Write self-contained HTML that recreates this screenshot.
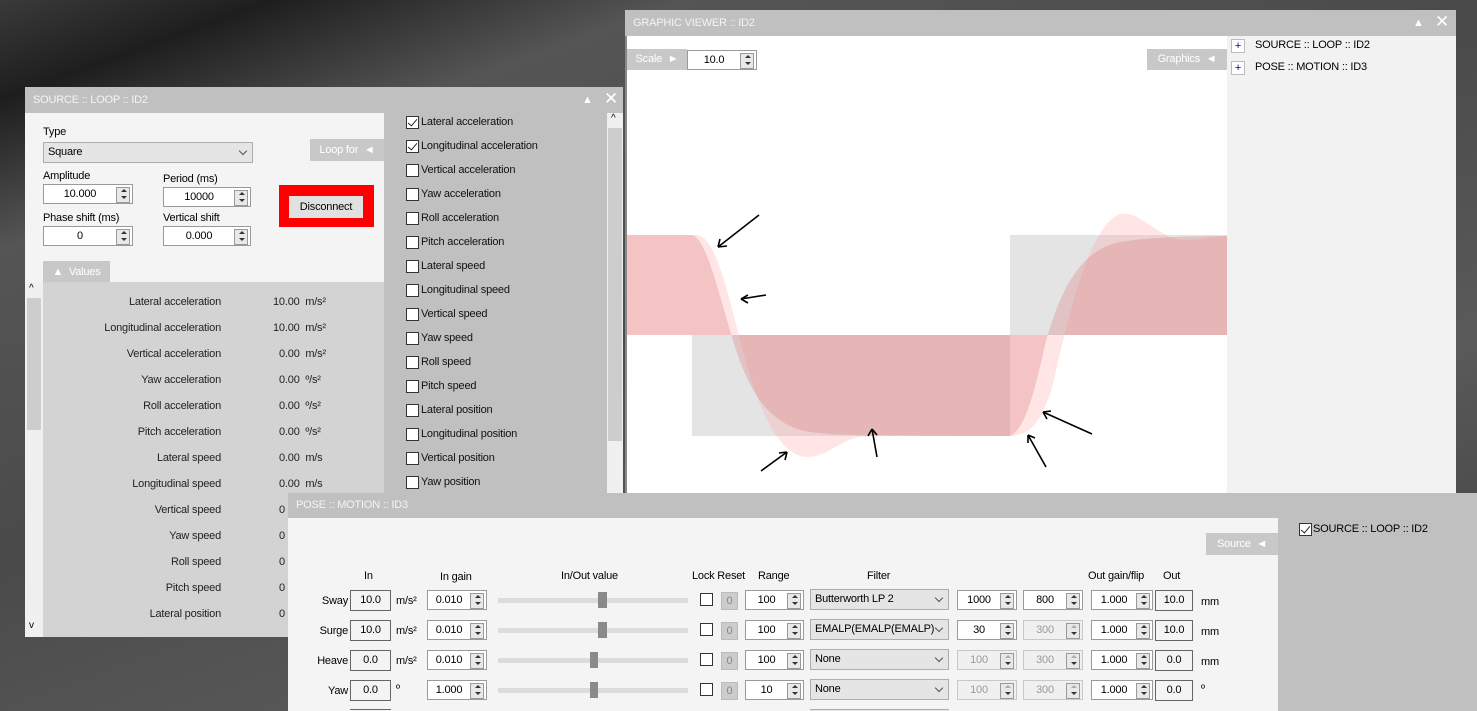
<!DOCTYPE html>
<html><head><meta charset="utf-8"><style>
*{box-sizing:border-box;margin:0;padding:0}
html,body{width:1477px;height:711px;overflow:hidden}
body{position:relative;font-family:"Liberation Sans",sans-serif;font-size:11px;letter-spacing:-0.2px;color:#000;
background:linear-gradient(160deg,#3a3a3a 0%,#1e1e1e 8%,#555 20%,#4a4a4a 45%,#5a5a5a 70%,#3c3c3c 100%)}
.a{position:absolute}
.tb{position:absolute;background:#c0c0c0;color:#f4f4f4;padding-left:8px;line-height:26px}
.in{position:absolute;background:#fff;border:1px solid #9a9a9a;height:20px;line-height:18px;text-align:center;padding-right:16px}
.in:before{content:"";position:absolute;right:2px;top:2px;width:12px;height:14px;border:1px solid #999;background:#e8e8e8}
.in:after{content:"";position:absolute;right:5px;top:4px;width:0;height:0;border:3px solid transparent;border-bottom-color:#333;border-top-width:0;box-shadow:none}
.in b{position:absolute;right:5px;top:11px;width:0;height:0;border:3px solid transparent;border-top-color:#333;border-bottom-width:0}
.dis{color:#999;background:#f0f0f0;border-color:#c8c8c8}
.dis:after{border-bottom-color:#aaa}
.tab{position:absolute;background:#c8c8c8;color:#fff;line-height:22px;text-align:center}
.cb{position:absolute;width:13px;height:13px;border:1px solid #333;background:#fff}
.ck:after{content:"";position:absolute;left:3px;top:0px;width:4px;height:8px;border:solid #222;border-width:0 1.5px 1.5px 0;transform:rotate(40deg)}
.lbl{position:absolute;text-align:right}
.cmb{position:absolute;background:#e5e5e5;border:1px solid #adadad;height:21px;line-height:19px;padding-left:4px;overflow:hidden;white-space:nowrap}
.cmb:after{content:"";position:absolute;right:6px;top:5px;width:5px;height:5px;border:solid #555;border-width:0 1px 1px 0;transform:rotate(45deg)}
.ob{position:absolute;border:1px solid #666;height:21px;line-height:19px;text-align:center;background:#f4f4f4}
.rs{position:absolute;width:17px;height:18px;background:#ccc;border:1px solid #bbb;color:#888;text-align:center;line-height:16px}
.tr{position:absolute;left:498px;width:190px;height:5px;background:#dcdcdc}
.th{position:absolute;width:9px;height:16px;background:#8a8a8a}
</style></head><body>

<!-- SOURCE window -->
<div class="tb" style="left:25px;top:87px;width:598px;height:26px">SOURCE :: LOOP :: ID2<span class="a" style="left:557px;top:0;color:#fff;font-size:11px">▲</span><span class="a" style="left:579px;top:-1px;color:#fff;font-size:17px">✕</span></div>
<div class="a" style="left:25px;top:113px;width:359px;height:169px;background:#f4f4f4"></div>
<div class="a" style="left:43px;top:126px">Type</div>
<div class="cmb" style="left:43px;top:142px;width:210px">Square</div>
<div class="a" style="left:43px;top:170px">Amplitude</div>
<div class="in" style="left:43px;top:184px;width:90px">10.000<b></b></div>
<div class="a" style="left:163px;top:173px">Period (ms)</div>
<div class="in" style="left:163px;top:187px;width:88px">10000<b></b></div>
<div class="a" style="left:43px;top:212px">Phase shift (ms)</div>
<div class="in" style="left:43px;top:226px;width:90px">0<b></b></div>
<div class="a" style="left:163px;top:212px">Vertical shift</div>
<div class="in" style="left:163px;top:226px;width:88px">0.000<b></b></div>
<div class="a" style="left:279px;top:185px;width:95px;height:42px;background:#f00"></div>
<div class="a" style="left:289px;top:196px;width:74px;height:22px;background:#e1e1e1;text-align:center;line-height:22px">Disconnect</div>
<div class="tab" style="left:310px;top:139px;width:74px">Loop for &nbsp;◄</div>
<div class="tab" style="left:43px;top:261px;width:67px">▲ &nbsp;Values</div>
<div class="a" style="left:25px;top:282px;width:18px;height:355px;background:#f0f0f0"><div class="a" style="left:2px;top:16px;width:14px;height:132px;background:#cdcdcd"></div><span class="a" style="left:4px;top:1px;font-size:10px">^</span><span class="a" style="left:4px;top:338px;font-size:10px">v</span></div>
<div class="a" style="left:43px;top:282px;width:341px;height:355px;background:#d3d3d3;color:#222">
<div class="lbl" style="right:163px;top:14px">Lateral acceleration</div><div class="a" style="left:230px;top:14px">10.00&nbsp; m/s²</div>
<div class="lbl" style="right:163px;top:40px">Longitudinal acceleration</div><div class="a" style="left:230px;top:40px">10.00&nbsp; m/s²</div>
<div class="lbl" style="right:163px;top:66px">Vertical acceleration</div><div class="a" style="left:236px;top:66px">0.00&nbsp; m/s²</div>
<div class="lbl" style="right:163px;top:92px">Yaw acceleration</div><div class="a" style="left:236px;top:92px">0.00&nbsp; º/s²</div>
<div class="lbl" style="right:163px;top:118px">Roll acceleration</div><div class="a" style="left:236px;top:118px">0.00&nbsp; º/s²</div>
<div class="lbl" style="right:163px;top:144px">Pitch acceleration</div><div class="a" style="left:236px;top:144px">0.00&nbsp; º/s²</div>
<div class="lbl" style="right:163px;top:170px">Lateral speed</div><div class="a" style="left:236px;top:170px">0.00&nbsp; m/s</div>
<div class="lbl" style="right:163px;top:196px">Longitudinal speed</div><div class="a" style="left:236px;top:196px">0.00&nbsp; m/s</div>
<div class="lbl" style="right:163px;top:222px">Vertical speed</div><div class="a" style="left:236px;top:222px">0</div>
<div class="lbl" style="right:163px;top:248px">Yaw speed</div><div class="a" style="left:236px;top:248px">0</div>
<div class="lbl" style="right:163px;top:274px">Roll speed</div><div class="a" style="left:236px;top:274px">0</div>
<div class="lbl" style="right:163px;top:300px">Pitch speed</div><div class="a" style="left:236px;top:300px">0</div>
<div class="lbl" style="right:163px;top:326px">Lateral position</div><div class="a" style="left:236px;top:326px">0</div>
</div>
<div class="a" style="left:384px;top:113px;width:223px;height:380px;background:#c0c0c0;color:#111">
<div class="cb ck" style="left:22px;top:3px"></div><div class="a" style="left:37px;top:3px">Lateral acceleration</div>
<div class="cb ck" style="left:22px;top:27px"></div><div class="a" style="left:37px;top:27px">Longitudinal acceleration</div>
<div class="cb" style="left:22px;top:51px"></div><div class="a" style="left:37px;top:51px">Vertical acceleration</div>
<div class="cb" style="left:22px;top:75px"></div><div class="a" style="left:37px;top:75px">Yaw acceleration</div>
<div class="cb" style="left:22px;top:99px"></div><div class="a" style="left:37px;top:99px">Roll acceleration</div>
<div class="cb" style="left:22px;top:123px"></div><div class="a" style="left:37px;top:123px">Pitch acceleration</div>
<div class="cb" style="left:22px;top:147px"></div><div class="a" style="left:37px;top:147px">Lateral speed</div>
<div class="cb" style="left:22px;top:171px"></div><div class="a" style="left:37px;top:171px">Longitudinal speed</div>
<div class="cb" style="left:22px;top:195px"></div><div class="a" style="left:37px;top:195px">Vertical speed</div>
<div class="cb" style="left:22px;top:219px"></div><div class="a" style="left:37px;top:219px">Yaw speed</div>
<div class="cb" style="left:22px;top:243px"></div><div class="a" style="left:37px;top:243px">Roll speed</div>
<div class="cb" style="left:22px;top:267px"></div><div class="a" style="left:37px;top:267px">Pitch speed</div>
<div class="cb" style="left:22px;top:291px"></div><div class="a" style="left:37px;top:291px">Lateral position</div>
<div class="cb" style="left:22px;top:315px"></div><div class="a" style="left:37px;top:315px">Longitudinal position</div>
<div class="cb" style="left:22px;top:339px"></div><div class="a" style="left:37px;top:339px">Vertical position</div>
<div class="cb" style="left:22px;top:363px"></div><div class="a" style="left:37px;top:363px">Yaw position</div>
</div>
<div class="a" style="left:607px;top:113px;width:16px;height:380px;background:#f0f0f0"><span class="a" style="left:4px;top:0;font-size:10px">^</span><div class="a" style="left:1px;top:15px;width:14px;height:313px;background:#cdcdcd"></div></div>

<!-- GRAPHIC VIEWER -->
<div class="tb" style="left:625px;top:10px;width:831px;height:26px">GRAPHIC VIEWER :: ID2<span class="a" style="left:788px;top:0;color:#fff;font-size:11px">▲</span><span class="a" style="left:810px;top:-1px;color:#fff;font-size:17px">✕</span></div>
<div class="a" style="left:625px;top:36px;width:2px;height:457px;background:#888"></div>
<div class="a" style="left:627px;top:36px;width:600px;height:457px;background:#fff"></div>
<div class="a" style="left:1227px;top:36px;width:229px;height:457px;background:#f2f2f2"></div>
<svg class="a" style="left:0;top:0" width="1477" height="711">
<rect x="692" y="335" width="318" height="101" fill="#e4e4e4"/>
<rect x="1010" y="235" width="217" height="100" fill="#e4e4e4"/>
<path d="M627,335 L627,235 L697,235 C712,237 722,270 735,320 C752,390 770,445 800,456 C825,462 840,437 866,436 C900,434 960,436 1010,436 C1030,436 1045,420 1055,375 C1070,310 1090,225 1120,214 C1140,210 1160,240 1185,240 C1200,240 1215,236 1227,236 L1227,335 Z" fill="rgba(255,160,160,0.28)"/>
<path d="M627,335 L627,235 L692,235 C705,238 715,280 730,330 C748,395 770,425 810,432 C840,436 880,436 1010,436 C1025,430 1035,390 1045,345 C1060,290 1080,250 1120,242 C1150,237 1190,236 1227,236 L1227,335 Z" fill="rgba(220,120,120,0.3)"/>
<g stroke="#000" stroke-width="1.6" fill="none">
<path d="M759,215 L718,247 M718,247 l9,-1 M718,247 l2,-8"/>
<path d="M766,295 L741,299 M741,299 l7,-4 M741,299 l7,4"/>
<path d="M761,471 L787,452 M787,452 l-8,1 M787,452 l-2,8"/>
<path d="M877,457 L872,429 M872,429 l-4,7 M872,429 l5,6"/>
<path d="M1092,434 L1043,412 M1043,412 l8,-1 M1043,412 l4,7"/>
<path d="M1046,467 L1028,435 M1028,435 l0,8 M1028,435 l7,3"/>
</g>
</svg>
<div class="tab" style="left:627px;top:49px;width:60px;height:21px;line-height:21px">Scale &nbsp;►</div>
<div class="in" style="left:687px;top:50px;width:70px">10.0<b></b></div>
<div class="tab" style="left:1147px;top:49px;width:80px;height:21px;line-height:21px">Graphics &nbsp;◄</div>
<div class="a" style="left:1231px;top:39px;width:14px;height:14px;border:1px solid #bbb;background:#fff;color:#00a;text-align:center;line-height:12px">+</div>
<div class="a" style="left:1255px;top:39px">SOURCE :: LOOP :: ID2</div>
<div class="a" style="left:1231px;top:61px;width:14px;height:14px;border:1px solid #bbb;background:#fff;color:#00a;text-align:center;line-height:12px">+</div>
<div class="a" style="left:1255px;top:61px">POSE :: MOTION :: ID3</div>

<!-- POSE window -->
<div class="tb" style="left:288px;top:493px;width:1189px;height:25px;line-height:25px">POSE :: MOTION :: ID3</div>
<div class="a" style="left:288px;top:518px;width:990px;height:193px;background:#f4f4f4"></div>
<div class="a" style="left:1278px;top:518px;width:199px;height:193px;background:#c0c0c0"></div>
<div class="cb ck" style="left:1299px;top:523px"></div><div class="a" style="left:1313px;top:523px">SOURCE :: LOOP :: ID2</div>
<div class="tab" style="left:1206px;top:533px;width:72px;height:22px">Source &nbsp;◄</div>
<div class="a" style="top:570px;left:364px">In</div>
<div class="a" style="top:571px;left:440px">In gain</div>
<div class="a" style="top:570px;left:561px">In/Out value</div>
<div class="a" style="top:570px;left:692px">Lock Reset</div>
<div class="a" style="top:570px;left:758px">Range</div>
<div class="a" style="top:570px;left:867px">Filter</div>
<div class="a" style="top:570px;left:1088px">Out gain/flip</div>
<div class="a" style="top:570px;left:1163px">Out</div>

<div class="lbl" style="left:300px;width:48px;top:595px">Sway</div><div class="ob" style="left:350px;top:590px;width:41px">10.0</div><div class="a" style="left:396px;top:595px">m/s²</div>
<div class="in" style="left:427px;top:590px;width:60px">0.010<b></b></div>
<div class="tr" style="top:598px"></div><div class="th" style="left:598px;top:592px"></div>
<div class="cb" style="left:700px;top:593px"></div><div class="rs" style="left:721px;top:592px">0</div>
<div class="in" style="left:745px;top:590px;width:59px">100<b></b></div>
<div class="cmb" style="left:810px;top:589px;width:139px">Butterworth LP 2</div>
<div class="in" style="left:957px;top:590px;width:60px">1000<b></b></div>
<div class="in" style="left:1023px;top:590px;width:60px">800<b></b></div>
<div class="in" style="left:1091px;top:590px;width:62px">1.000<b></b></div>
<div class="ob" style="left:1155px;top:590px;width:38px">10.0</div><div class="a" style="left:1201px;top:596px">mm</div>

<div class="lbl" style="left:300px;width:48px;top:625px">Surge</div><div class="ob" style="left:350px;top:620px;width:41px">10.0</div><div class="a" style="left:396px;top:625px">m/s²</div>
<div class="in" style="left:427px;top:620px;width:60px">0.010<b></b></div>
<div class="tr" style="top:628px"></div><div class="th" style="left:598px;top:622px"></div>
<div class="cb" style="left:700px;top:623px"></div><div class="rs" style="left:721px;top:622px">0</div>
<div class="in" style="left:745px;top:620px;width:59px">100<b></b></div>
<div class="cmb" style="left:810px;top:619px;width:139px">EMALP(EMALP(EMALP)</div>
<div class="in" style="left:957px;top:620px;width:60px">30<b></b></div>
<div class="in dis" style="left:1023px;top:620px;width:60px">300<b></b></div>
<div class="in" style="left:1091px;top:620px;width:62px">1.000<b></b></div>
<div class="ob" style="left:1155px;top:620px;width:38px">10.0</div><div class="a" style="left:1201px;top:626px">mm</div>

<div class="lbl" style="left:300px;width:48px;top:655px">Heave</div><div class="ob" style="left:350px;top:650px;width:41px">0.0</div><div class="a" style="left:396px;top:655px">m/s²</div>
<div class="in" style="left:427px;top:650px;width:60px">0.010<b></b></div>
<div class="tr" style="top:658px"></div><div class="th" style="left:590px;top:652px;width:8px"></div>
<div class="cb" style="left:700px;top:653px"></div><div class="rs" style="left:721px;top:652px">0</div>
<div class="in" style="left:745px;top:650px;width:59px">100<b></b></div>
<div class="cmb" style="left:810px;top:649px;width:139px">None</div>
<div class="in dis" style="left:957px;top:650px;width:60px">100<b></b></div>
<div class="in dis" style="left:1023px;top:650px;width:60px">300<b></b></div>
<div class="in" style="left:1091px;top:650px;width:62px">1.000<b></b></div>
<div class="ob" style="left:1155px;top:650px;width:38px">0.0</div><div class="a" style="left:1201px;top:656px">mm</div>

<div class="lbl" style="left:300px;width:48px;top:685px">Yaw</div><div class="ob" style="left:350px;top:680px;width:41px">0.0</div><div class="a" style="left:396px;top:683px">º</div>
<div class="in" style="left:427px;top:680px;width:60px">1.000<b></b></div>
<div class="tr" style="top:688px"></div><div class="th" style="left:590px;top:682px;width:8px"></div>
<div class="cb" style="left:700px;top:683px"></div><div class="rs" style="left:721px;top:682px">0</div>
<div class="in" style="left:745px;top:680px;width:59px">10<b></b></div>
<div class="cmb" style="left:810px;top:679px;width:139px">None</div>
<div class="in dis" style="left:957px;top:680px;width:60px">100<b></b></div>
<div class="in dis" style="left:1023px;top:680px;width:60px">300<b></b></div>
<div class="in" style="left:1091px;top:680px;width:62px">1.000<b></b></div>
<div class="ob" style="left:1155px;top:680px;width:38px">0.0</div><div class="a" style="left:1201px;top:683px">º</div>

<div class="a" style="left:350px;top:709px;width:41px;height:2px;border-top:1px solid #666"></div>
<div class="a" style="left:810px;top:709px;width:139px;height:2px;border-top:1px solid #adadad;background:#e5e5e5"></div>
</body></html>
